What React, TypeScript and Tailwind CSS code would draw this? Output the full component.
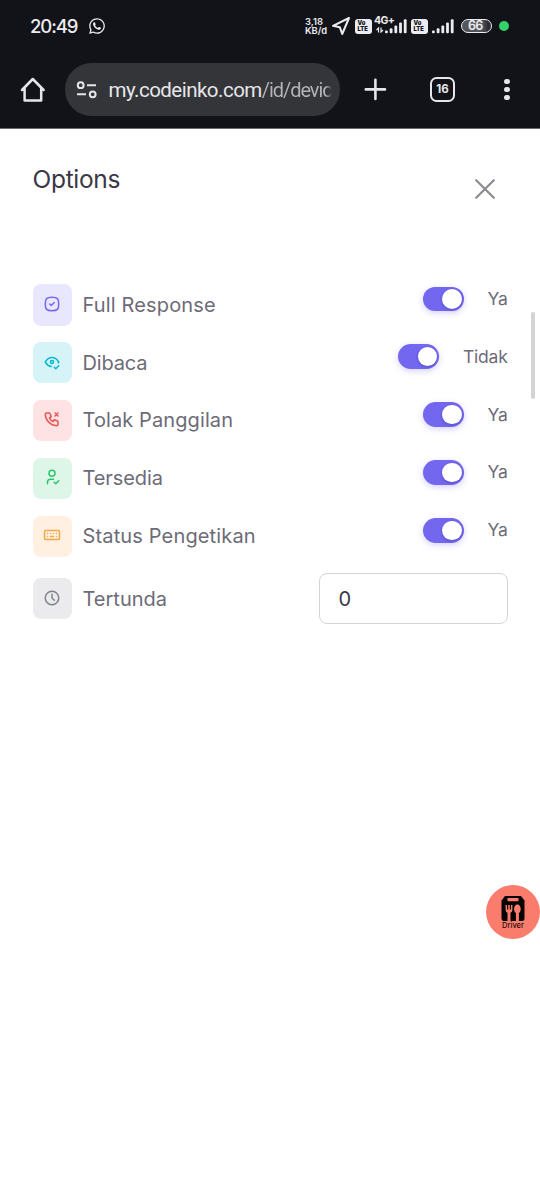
import type { ReactNode } from 'react';
import { FaWhatsapp } from 'react-icons/fa';
import {
  TbClock,
  TbEyeCheck,
  TbKeyboard,
  TbPhoneX,
  TbSquareRoundedCheck,
  TbUserCheck,
} from 'react-icons/tb';

type Option = {
  label: string;
  value: string;
  icon: ReactNode;
  color: string;
  labelStyle: string;
};

const options: Option[] = [
  {
    label: 'Full Response',
    value: 'Ya',
    icon: <TbSquareRoundedCheck size={18} />,
    color: 'bg-[#e9e7fd] text-[#7367f0]',
    labelStyle: 'tracking-[0.15px]',
  },
  {
    label: 'Dibaca',
    value: 'Tidak',
    icon: <TbEyeCheck size={18} />,
    color: 'bg-[#d6f4f8] text-[#00bad1]',
    labelStyle: 'tracking-[-0.15px]',
  },
  {
    label: 'Tolak Panggilan',
    value: 'Ya',
    icon: <TbPhoneX size={18} />,
    color: 'bg-[#ffe2e3] text-[#ea5455]',
    labelStyle: 'tracking-[0.1px]',
  },
  {
    label: 'Tersedia',
    value: 'Ya',
    icon: <TbUserCheck size={18} />,
    color: 'bg-[#ddf6e8] text-[#28c76f]',
    labelStyle: 'tracking-[-0.1px]',
  },
  {
    label: 'Status Pengetikan',
    value: 'Ya',
    icon: <TbKeyboard size={18} />,
    color: 'bg-[#fff0e1] text-[#f0a848]',
    labelStyle: 'tracking-[0.15px]',
  },
];

function VoLte() {
  return (
    <div className="flex h-[15px] w-[17px] flex-col justify-center rounded-[3px] bg-[#ececf0] pl-[2.5px] text-[5.8px] font-black text-[#121318]">
      <span className="h-[6.5px] leading-[6.5px]">Vo</span>
      <span className="h-[6.5px] leading-[6.5px]">LTE</span>
    </div>
  );
}

function Signal() {
  return (
    <svg width="22" height="15" viewBox="0 0 22 15" fill="#ececf0">
      <rect x="0" y="11.5" width="2.8" height="2.8" rx="1" />
      <rect x="4.7" y="9.3" width="2.8" height="5" rx="1" />
      <rect x="9.4" y="6.6" width="2.8" height="7.7" rx="1" />
      <rect x="14.1" y="3.6" width="2.8" height="10.7" rx="1" />
      <rect x="18.8" y="0.3" width="2.8" height="14" rx="1" />
    </svg>
  );
}

function StatusBar() {
  return (
    <div className="flex h-[52px] items-center pl-[30px] text-[#ececf0]">
      <span className="w-[58px] pt-px text-[18.5px] font-medium tracking-[-1.1px]">20:49</span>
      <FaWhatsapp size={18} />
      <div className="ml-[199px] w-[25px] text-[9.4px] font-semibold">
        <div className="h-[9.5px] leading-[9.5px]">3,18</div>
        <div className="h-[9.5px] leading-[9.5px]">KB/d</div>
      </div>
      <svg className="ml-px" width="20" height="20" viewBox="0 0 20 20" fill="none" stroke="#ececf0" strokeWidth="2" strokeLinejoin="round">
        <path d="M18 2 L2 9.8 L8.8 11.2 L11.2 18 Z" />
      </svg>
      <div className="ml-[4px]"><VoLte /></div>
      <div className="relative ml-[13px]">
        <Signal />
        <span className="absolute top-[-4px] left-[-11px] text-[10.5px] leading-[12px] font-bold tracking-[-0.6px]">4G+</span>
        <svg className="absolute top-[8.5px] left-[-9px]" width="8" height="6" viewBox="0 0 8 6" fill="none" stroke="#ececf0" strokeWidth="1.2">
          <path d="M0.5 3.2 L2.5 1 V5.5 M5 0.5 V5 L7 3" />
        </svg>
      </div>
      <div className="ml-[4px]"><VoLte /></div>
      <div className="ml-[4px]"><Signal /></div>
      <div className="relative ml-[7px] flex h-[14px] w-[31px] items-center overflow-hidden rounded-full border-[1.5px] border-[#ececf0] bg-linear-to-r from-[#55565b] from-70% to-[#2b2c31] to-90% pl-[6px] text-[12.5px] font-semibold tracking-[-0.7px]">
        66
      </div>
      <div className="ml-[7px] size-[9.5px] rounded-full bg-[#35d16b]" />
    </div>
  );
}

function AddressBar() {
  return (
    <div className="flex h-[75px] items-center text-[#e6e6ea]">
      <svg className="ml-[20px]" width="26" height="26" viewBox="0 0 26 26" fill="none" stroke="currentColor" strokeWidth="2.5" strokeLinejoin="round" strokeLinecap="round">
        <path d="M2 13 L12.8 2 L23.6 13 M4.6 11 V23.5 H21.2 V11" />
      </svg>
      <div className="ml-[19px] flex h-[53px] w-[275px] items-center rounded-full bg-[#343539] pl-[11px]">
        <svg width="22" height="18" viewBox="0 0 22 18" fill="none" stroke="currentColor" strokeWidth="2">
          <circle cx="4.7" cy="4.2" r="2.9" />
          <path d="M11 4.2 H20 M1 13.3 H10" />
          <circle cx="16.7" cy="13.3" r="2.9" />
        </svg>
        <div className="ml-[10.5px] pt-px font-[Roboto,sans-serif] text-[20.5px] tracking-[-0.52px] whitespace-nowrap">
          my.codeinko.com<span className="bg-linear-to-r from-[#b4b5ba] from-92% to-[#343539] bg-clip-text text-[20px] tracking-[-1.05px] text-transparent">/id/devic</span>
        </div>
      </div>
      <svg className="ml-[24px]" width="23" height="23" viewBox="0 0 23 23" stroke="currentColor" strokeWidth="2.6" strokeLinecap="round">
        <path d="M11.4 1.8 V21 M1.8 11.4 H21" />
      </svg>
      <div className="ml-[43px] flex size-[25px] items-center justify-center rounded-[6.5px] border-[2.5px] border-current text-[11.5px] font-bold">
        16
      </div>
      <div className="ml-[49px] flex flex-col gap-[2.5px]">
        <div className="size-[5.6px] rounded-full bg-current" />
        <div className="size-[5.6px] rounded-full bg-current" />
        <div className="size-[5.6px] rounded-full bg-current" />
      </div>
    </div>
  );
}

function IconBox({ color, children }: { color: string; children: ReactNode }) {
  return (
    <div className={`flex h-[41.5px] w-[39px] justify-center rounded-[8px] pt-[10.7px] ${color}`}>
      {children}
    </div>
  );
}

function Toggle() {
  return (
    <div className="flex h-[24.5px] w-[41px] items-center justify-end rounded-full bg-[#7367f0] pr-[2px] shadow-[0_2px_6px_rgba(115,103,240,0.3)]">
      <div className="size-[19.5px] rounded-full bg-white shadow-[0_1px_3px_rgba(40,30,120,0.35)]" />
    </div>
  );
}

function OptionRow({ option }: { option: Option }) {
  return (
    <div className="flex h-[57.9px] items-start">
      <IconBox color={option.color}>{option.icon}</IconBox>
      <span className={`ml-[11px] pt-[5.7px] text-[20px] leading-[30px] text-[#6d6b77] ${option.labelStyle}`}>
        {option.label}
      </span>
      <div className="ml-auto flex items-center pt-[2.5px]">
        <Toggle />
        <span className="ml-[24px] text-[17.5px] leading-[24px] tracking-[-0.25px] text-[#6d6b77]">{option.value}</span>
      </div>
    </div>
  );
}

function DriverButton() {
  return (
    <div className="absolute top-[885px] right-0 flex size-[54px] flex-col items-center rounded-full bg-[#fa7c6c] pt-[11px]">
      <svg width="24" height="25" viewBox="0 0 24 25">
        <path d="M4 0 H20 L23.5 4.5 V22 Q23.5 25 21 25 H3 Q0.5 25 0.5 22 V4.5 Z" fill="#080303" />
        <rect x="6.5" y="2" width="11" height="3.2" rx="0.6" fill="#fa7c6c" />
        <path d="M4.6 9 V14 Q4.6 16 6.5 16.8 V25 H9.5 V16.8 Q11.4 16 11.4 14 V9 H10 V13.5 H8.8 V9 H7.2 V13.5 H6 V9 Z" fill="#fa7c6c" />
        <path d="M16.4 8.5 C20.2 8.5 20.8 15.6 17.9 17 V25 H14.9 V17 C12 15.6 12.6 8.5 16.4 8.5 Z" fill="#fa7c6c" />
      </svg>
      <span className="mt-px text-[7.5px] leading-[8px] font-medium text-[#1c0b09]">Driver</span>
    </div>
  );
}

export default function App() {
  return (
    <div className="relative h-[1200px] w-[540px] overflow-hidden bg-white font-[Inter,sans-serif]">
      <header className="h-[129px] border-b border-[#6a6a6e] bg-[#121318]">
        <StatusBar />
        <AddressBar />
      </header>

      <main className="pr-[32.5px] pl-[32.5px]">
        <div className="flex h-[155px] items-start justify-between pt-[34px]">
          <h1 className="text-[24.5px] leading-[32px] tracking-[-0.3px] text-[#393844]">Options</h1>
          <svg className="mt-[16px] mr-[12.5px]" width="20" height="20" viewBox="0 0 20 20" stroke="#8b8a91" strokeWidth="2.2" strokeLinecap="round">
            <path d="M1.2 1.2 L18.8 18.8 M18.8 1.2 L1.2 18.8" />
          </svg>
        </div>

        {options.map((option) => (
          <OptionRow key={option.label} option={option} />
        ))}

        <div className="flex items-start">
          <div className="pt-[4.5px]">
            <IconBox color="bg-[#ebebed] text-[#808390]"><TbClock size={18} /></IconBox>
          </div>
          <span className="ml-[11px] pt-[10.5px] text-[20px] leading-[30px] text-[#6d6b77]">Tertunda</span>
          <div className="ml-auto flex h-[50.5px] w-[189px] items-center rounded-[8px] border-[1.5px] border-[#d5d4d8] pl-[19px] text-[20px] text-[#393844]">
            0
          </div>
        </div>
      </main>

      <div className="absolute top-[312px] right-[5px] h-[87px] w-[4px] rounded-full bg-[#d4d4d4]" />
      <DriverButton />
    </div>
  );
}
